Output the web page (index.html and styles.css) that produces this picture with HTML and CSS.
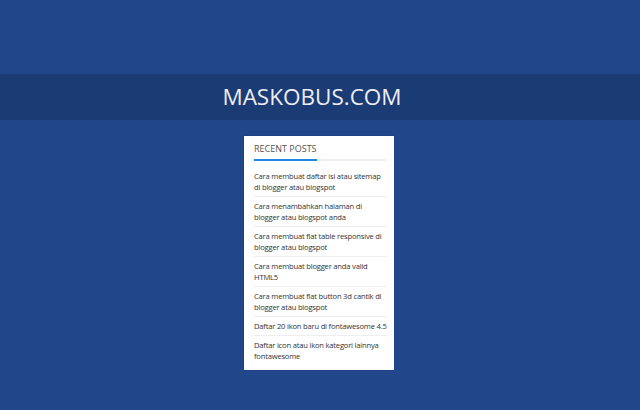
FILE: index.html
```html
<!DOCTYPE html>
<html lang="id">
<head>
<meta charset="utf-8">
<title>MASKOBUS.COM</title>
<link rel="stylesheet" href="styles.css">
</head>
<body>
<header class="site-header">
  <h1 class="site-title">MASKOBUS.COM</h1>
</header>
<main class="main">
  <section class="widget">
    <h2 class="widget-title"><span>RECENT POSTS</span></h2>
    <ul class="post-list">
      <li>Cara membuat daftar isi atau sitemap di blogger atau blogspot</li>
      <li>Cara menambahkan halaman di blogger atau blogspot anda</li>
      <li>Cara membuat flat table responsive di blogger atau blogspot</li>
      <li>Cara membuat blogger anda valid HTML5</li>
      <li>Cara membuat flat button 3d cantik di blogger atau blogspot</li>
      <li>Daftar 20 ikon baru di fontawesome 4.5</li>
      <li>Daftar icon atau ikon kategori lainnya fontawesome</li>
    </ul>
  </section>
</main>
</body>
</html>
```
FILE: styles.css
```css
html, body {
  margin: 0;
  padding: 0;
}
body {
  background: #21468a;
  font-family: "Open Sans", "Liberation Sans", sans-serif;
  height: 410px;
  overflow: hidden;
  padding-top: 74px;
  box-sizing: border-box;
}
.site-header {
  background: #1b3b74;
  height: 46px;
  display: flex;
  justify-content: center;
  padding-right: 16px;
}
.site-title {
  margin: 0;
  font-size: 22.5px;
  line-height: 46px;
  font-weight: 400;
  color: #eceef3;
  letter-spacing: 0;
}
.main {
  display: flex;
  justify-content: center;
  padding-top: 16px;
  padding-right: 2px;
}
.widget {
  width: 150px;
  box-sizing: border-box;
  background: #fff;
  padding: 7px 8px 5px 10px;
  box-shadow: 0 0 1px rgba(0, 0, 0, 0.35);
}
.widget-title {
  margin: 0;
  font-size: 9px;
  line-height: 12px;
  font-weight: 400;
  color: #555;
  padding-bottom: 4px;
  border-bottom: 2px solid #eeeeee;
}
.widget-title span {
  display: inline-block;
  position: relative;
}
.widget-title span::after {
  content: "";
  position: absolute;
  left: 0;
  right: 0;
  bottom: -6px;
  height: 2px;
  background: #1e88e5;
}
.post-list {
  list-style: none;
  margin: 6px -1px 0 0;
  padding: 0;
}
.post-list li {
  font-size: 7.6px;
  letter-spacing: -0.2px;
  line-height: 11px;
  color: #333;
  padding: 4px 0 3px;
  border-bottom: 1px solid #eeeeee;
}
.post-list li:last-child {
  border-bottom: none;
}
```
